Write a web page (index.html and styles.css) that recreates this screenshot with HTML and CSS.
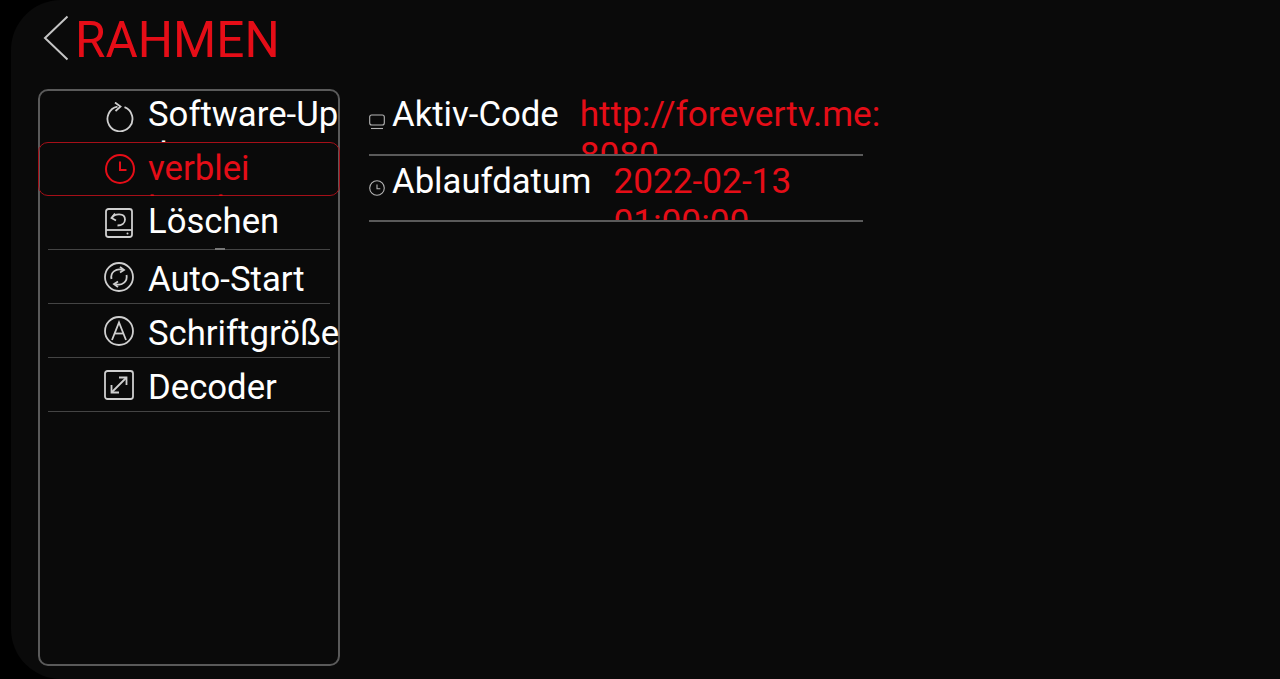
FILE: index.html
```html
<!DOCTYPE html>
<html lang="de">
<head>
  <meta charset="UTF-8" />
  <meta name="viewport" content="width=device-width, initial-scale=1.0" />
  <title>Rahmen</title>
  <link rel="stylesheet" href="styles.css">
</head>
<body>

  <div class="panel">
    <header class="top">
      <svg class="back" viewBox="0 0 26 46" width="26" height="46">
        <path d="M24.5 1.5 L2 23 L24.5 44.5" />
      </svg>
      <h1>RAHMEN</h1>
    </header>

    <div class="content">
      <nav class="menu">
        <div class="item first">
          <svg class="icon" viewBox="0 0 30 30">
            <path d="M13.5 4.6 A12.5 12.5 0 1 0 20.5 5.2" />
            <path d="M11 0.5 L16.5 4.6 L11.5 9" />
          </svg>
          <span class="label">Software-Up<br>date</span>
        </div>
        <div class="item active">
          <svg class="icon" viewBox="0 0 30 30">
            <circle cx="15" cy="15" r="14" />
            <path d="M15 7.5 V16 H21.5" />
          </svg>
          <span class="label">verblei<br>bende Zeit</span>
        </div>
        <div class="item line clear">
          <svg class="icon" viewBox="0 0 30 30">
            <rect x="2" y="1" width="26" height="28" rx="2.5" />
            <path d="M2 22 H28" />
            <path d="M11 5.5 L7.5 10 L12 12.5" />
            <path d="M8 10 C10 5.5 21 4.5 21 11.5 C21 15.5 17.5 17.5 13.5 17.5" />
            <circle cx="23.5" cy="25.5" r="1" class="dot" />
          </svg>
          <span class="label">Löschen</span>
          <i class="tick"></i>
        </div>
        <div class="item line">
          <svg class="icon" viewBox="0 0 30 30">
            <circle cx="15" cy="15" r="14" />
            <path d="M7.5 17 C6 10 12.5 6 18.5 8" />
            <path d="M16 5 L20 8 L16 10.5" />
            <path d="M22.5 13 C24 20 17.5 24 11.5 22" />
            <path d="M14 19.5 L10 22 L14 25" />
          </svg>
          <span class="label">Auto-Start</span>
        </div>
        <div class="item line">
          <svg class="icon" viewBox="0 0 30 30">
            <circle cx="15" cy="15" r="14" />
            <path d="M8 24 L15 6.5 L22 24" />
            <path d="M10.5 17.5 H19.5" />
          </svg>
          <span class="label">Schriftgröße</span>
        </div>
        <div class="item line">
          <svg class="icon" viewBox="0 0 30 30">
            <rect x="1" y="1" width="28" height="28" rx="2.5" />
            <path d="M8 22 L22 8" />
            <path d="M15 7.5 H22.5 V15" />
            <path d="M7.5 15 V22.5 H15" />
          </svg>
          <span class="label">Decoder</span>
        </div>
      </nav>

      <section class="details">
        <div class="row">
          <svg class="small-icon" viewBox="0 0 16 16">
            <rect x="0.7" y="1" width="14.6" height="10" rx="2" />
            <path d="M2 14.5 H14" />
          </svg>
          <span class="name">Aktiv-Code</span>
          <span class="value">http://forevertv.me:<br>8080</span>
        </div>
        <div class="row second">
          <svg class="small-icon" viewBox="0 0 16 16">
            <circle cx="8" cy="8" r="7.3" />
            <path d="M8 4.5 V8.7 H11.3" />
          </svg>
          <span class="name">Ablaufdatum</span>
          <span class="value">2022-02-13<br>01:00:00</span>
        </div>
      </section>
    </div>
  </div>

</body>
</html>
```

FILE: styles.css
```css
* {
  margin: 0;
  padding: 0;
  box-sizing: border-box;
}
html, body {
  height: 100%;
  overflow: hidden;
}
body {
  font-family: Roboto, sans-serif;
  background-color: #000;
  color: #fff;
}
.panel {
  height: 679px;
  margin-left: 11px;
  padding: 16px 0 13px 27px;
  background-color: #0a0a0a;
  border-radius: 50px 0 0 50px;
  display: flex;
  flex-direction: column;
}
.top {
  display: flex;
  align-items: center;
  gap: 6px;
  height: 44px;
  margin-left: 5px;
}
.back {
  flex-shrink: 0;
}
.back path {
  fill: none;
  stroke: #c4c4c4;
  stroke-width: 2;
}
.top h1 {
  font-size: 49.5px;
  font-weight: 400;
  line-height: 48px;
  padding-top: 3px;
  color: #e50d17;
}
.content {
  display: flex;
  flex: 1;
  margin-top: 29px;
  min-height: 0;
}
.menu {
  width: 302px;
  border: 2px solid #5a5a5a;
  border-radius: 10px;
  flex-shrink: 0;
}
.item {
  position: relative;
  display: flex;
  align-items: center;
  height: 54px;
  margin: 0 8px;
  padding-left: 56px;
  gap: 14px;
}
.item.first {
  height: 51px;
}
.item.line {
  border-bottom: 1px solid #444;
}
.item.active {
  height: 54px;
  margin: 0 -2px;
  padding-left: 66px;
  gap: 13px;
  border: 1px solid #a50f18;
  border-radius: 10px;
  color: #e50d17;
}
.icon {
  width: 30px;
  height: 30px;
  flex-shrink: 0;
  fill: none;
  stroke: #cfcfcf;
  stroke-width: 1.8;
}
.active .icon {
  stroke: #e50d17;
  stroke-width: 2;
}
.icon .dot {
  fill: #cfcfcf;
  stroke: none;
}
.label {
  display: block;
  align-self: flex-start;
  width: 192px;
  height: 53px;
  padding-top: 8.5px;
  font-size: 34.7px;
  line-height: 41px;
  white-space: nowrap;
  overflow: hidden;
  flex-shrink: 0;
}
.first .label {
  height: 51px;
  padding-top: 2.5px;
}
.active .label,
.clear .label {
  padding-top: 4.5px;
}
.tick {
  position: absolute;
  left: 167px;
  bottom: -1px;
  width: 10px;
  height: 2px;
  background-color: #777;
}
.details {
  width: 494px;
  margin-top: 1px;
  margin-left: 29px;
  flex-shrink: 0;
}
.row {
  display: flex;
  align-items: flex-start;
  height: 66px;
  border-bottom: 2px solid #5a5a5a;
}
.small-icon {
  width: 16px;
  height: 16px;
  margin-top: 24px;
  margin-right: 7px;
  flex-shrink: 0;
  fill: none;
  stroke: #b5b5b5;
  stroke-width: 1.1;
}
.name {
  margin-top: 4px;
  font-size: 34.7px;
  line-height: 41px;
  flex-shrink: 0;
}
.value {
  display: block;
  height: 60px;
  margin-top: 4px;
  margin-left: 21px;
  font-size: 35.2px;
  line-height: 41px;
  color: #e50d17;
  white-space: nowrap;
  overflow: hidden;
  flex-shrink: 0;
}
.second .name,
.second .value {
  margin-top: 5px;
}
.second .value {
  height: 59px;
  margin-left: 22px;
}
```
